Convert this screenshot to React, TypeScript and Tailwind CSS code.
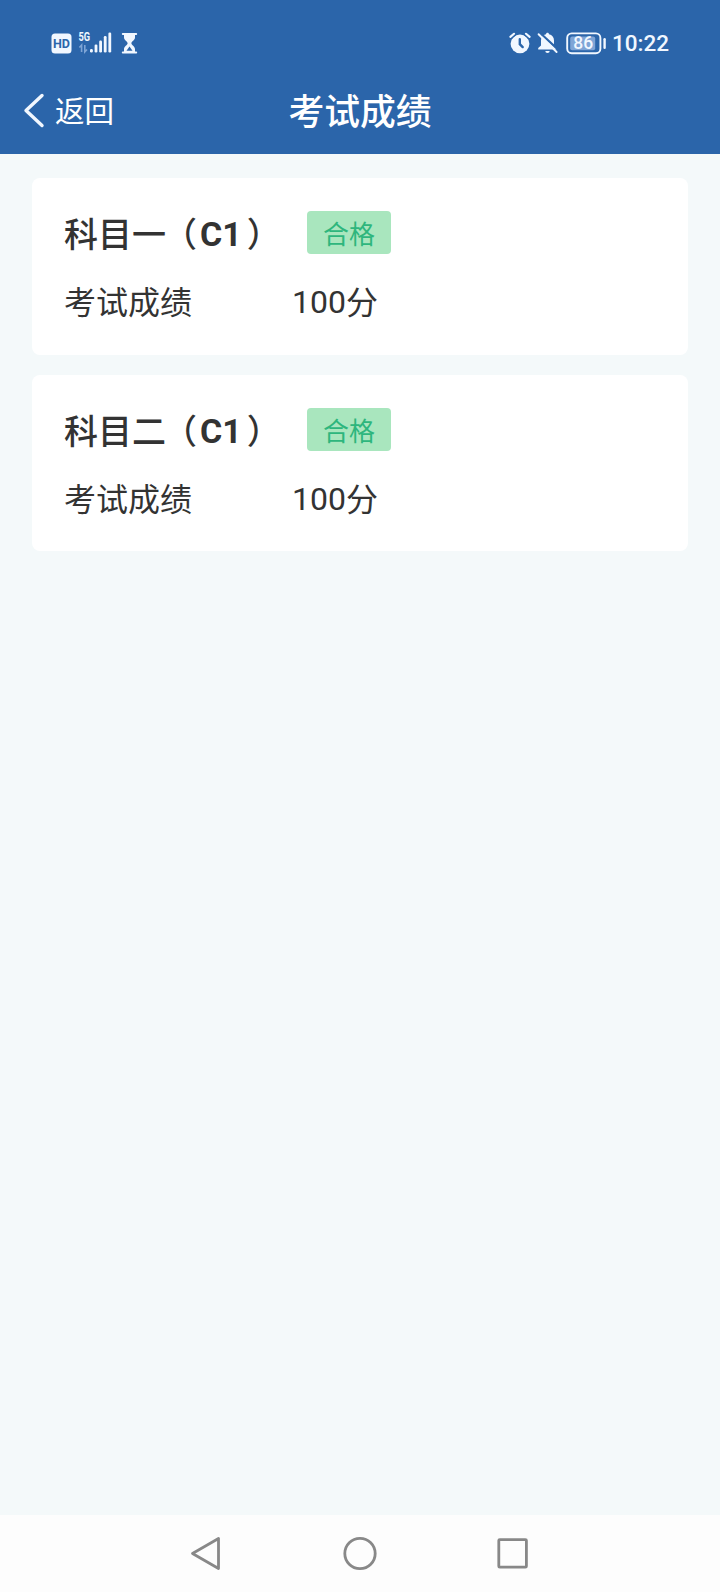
import * as React from 'react';

type Exam = {
  subject: string;
  license: string;
  score: number;
  result: string;
};

const exams: Exam[] = [
  { subject: '科目一', license: 'C1', score: 100, result: '合格' },
  { subject: '科目二', license: 'C1', score: 100, result: '合格' },
];

const SignalIcon: React.FC = () => (
  <svg className="ml-[6px] overflow-visible" width="34" height="24" viewBox="0 0 34 24" fill="#f1f7ff">
    <text x="0.4" y="10.4" fontSize="12.5" fontWeight="700" textLength="11.6" lengthAdjust="spacingAndGlyphs">5G</text>
    <path d="M3.6 21v-7L1.4 16.5M6.8 14v7l2.2-2.5" fill="none" stroke="#7fa5d6" strokeWidth="1.6" />
    <rect x="12" y="18" width="2.8" height="3.4" rx="1.2" />
    <rect x="16.6" y="13.5" width="2.8" height="7.9" rx="1.2" />
    <rect x="21.2" y="9.5" width="2.8" height="11.9" rx="1.2" />
    <rect x="25.8" y="5" width="2.8" height="16.4" rx="1.2" />
    <rect x="30.4" y="1.5" width="2.8" height="19.9" rx="1.2" />
  </svg>
);

const HourglassIcon: React.FC = () => (
  <svg className="ml-[9px]" width="17" height="22" viewBox="0 0 17 22">
    <path d="M1.8 2h13.4M1.8 20.5h13.4" stroke="#f1f7ff" strokeWidth="2" strokeLinecap="round" />
    <path d="M3 2v3.5c0 2.5 3.6 4 3.6 5.7S3 14.5 3 17v3.5h11V17c0-2.5-3.6-4.1-3.6-5.8S14 8 14 5.5V2z" fill="#f1f7ff" />
    <path d="M8.500 14.500l3 4.200h-6z" fill="#2b65aa" />
  </svg>
);

const AlarmIcon: React.FC = () => (
  <svg width="22" height="22" viewBox="0 0 22 22">
    <path d="M1.4 4.8 5 1.8M20.6 4.8 17 1.8" stroke="#f1f7ff" strokeWidth="2.2" strokeLinecap="round" />
    <circle cx="11" cy="11.8" r="9.4" fill="#f1f7ff" />
    <path d="M10.8 7.2v5l2.9 2.9" stroke="#2b65aa" strokeWidth="2.4" strokeLinecap="round" fill="none" />
    <path d="M2.5 6.6 7 2.2M19.5 6.6 15 2.2" stroke="#2b65aa" strokeWidth="1.2" />
  </svg>
);

const MutedIcon: React.FC = () => (
  <svg className="ml-[6px]" width="21" height="22" viewBox="0 0 21 22">
    <path d="M10.5.8c.9 0 1.5.6 1.5 1.5 3.2.7 5 3 5 6.2v5l2.3 2.5v1.5H1.2V16L4 13.5v-5c0-3.2 1.8-5.5 5-6.2C9 1.4 9.6.8 10.5.8zM8.3 18.9h4.4a2.2 2 0 0 1-4.4 0z" fill="#f1f7ff" />
    <path d="M3.2 1 21.4 18" stroke="#2b65aa" strokeWidth="2.2" />
    <path d="M1.6 2.2 19.6 20" stroke="#f1f7ff" strokeWidth="1.9" strokeLinecap="round" />
  </svg>
);

const BatteryIcon: React.FC = () => (
  <svg className="ml-[8px]" width="41" height="23" viewBox="0 0 41 23">
    <rect x="1.2" y="1.4" width="33.2" height="19.8" rx="4.5" fill="none" stroke="#f1f7ff" strokeWidth="1.9" />
    <rect x="4.2" y="4.4" width="25" height="13.8" rx="2" fill="#7fa5d6" />
    <rect x="37.4" y="6" width="2.4" height="11" rx="1.2" fill="#f1f7ff" />
    <text x="17.2" y="17.3" fontSize="17.5" fontWeight="500" textAnchor="middle" fill="#f1f7ff">86</text>
  </svg>
);

const StatusBar: React.FC = () => (
  <div className="flex h-[68px] items-center justify-between pt-[18px] pr-[51px] pl-[51px]">
    <div className="flex items-center">
      <svg width="21" height="21" viewBox="0 0 21 21">
        <rect x="0.5" y="0.5" width="20" height="20" rx="3.5" fill="#f1f7ff" />
        <text x="10.5" y="15.4" fontSize="13.5" fontWeight="700" textAnchor="middle" textLength="17" lengthAdjust="spacingAndGlyphs" fill="#2b65aa">HD</text>
      </svg>
      <SignalIcon />
      <HourglassIcon />
    </div>
    <div className="flex items-center">
      <AlarmIcon />
      <MutedIcon />
      <BatteryIcon />
      <span className="ml-[5px] pt-px text-[22.5px] leading-none font-medium text-[#f1f7ff]">10:22</span>
    </div>
  </div>
);

const Header: React.FC = () => (
  <header className="bg-[#2b65aa] text-white">
    <StatusBar />
    <div className="grid h-[86px] grid-cols-[1fr_auto_1fr] items-center">
      <button className="flex items-center pl-[23px] text-[29.5px] leading-none">
        <svg width="22" height="36" viewBox="0 0 22 36" fill="none" stroke="#f1f7ff" strokeWidth="3.4" strokeLinecap="round" strokeLinejoin="round">
          <path d="M19 2.5 3 17.5 19 32.5" />
        </svg>
        <span className="ml-[10px] pt-[3px]">返回</span>
      </button>
      <h1 className="pt-[5px] text-[35.8px] leading-none font-medium">考试成绩</h1>
    </div>
  </header>
);

const ExamCard: React.FC<{ exam: Exam }> = ({ exam }) => (
  <section className="h-[176.5px] rounded-[8px] bg-white px-8 pt-[33px] text-[#333]">
    <div className="flex h-[43px] items-center">
      <h2 className="flex h-[43px] w-[243px] items-center pt-[5px] text-[34px] leading-[38px] font-medium whitespace-nowrap">
        <span>{exam.subject}</span>
        <span className="ml-[14px] [font-feature-settings:'halt']">（</span>
        <span className="ml-[3px] pb-[2px] font-bold">{exam.license}</span>
        <span className="ml-[5px] [font-feature-settings:'halt']">）</span>
      </h2>
      <span className="h-[43px] rounded-[4px] bg-[#a9e6be] px-4 text-[26px] leading-[48px] text-[#2eb67d]">{exam.result}</span>
    </div>
    <div className="mt-[25px] flex h-[46px] items-start text-[32px] leading-[46px]">
      <span className="w-[228px] pt-px">考试成绩</span>
      <span>{exam.score}</span>
      <span className="pt-px">分</span>
    </div>
  </section>
);

const NavBar: React.FC = () => (
  <nav className="flex h-[77px] items-center justify-center bg-[#fdfdfd]">
    <svg width="340" height="36" viewBox="0 0 340 36" fill="none" stroke="#888" strokeWidth="2.8" strokeLinejoin="round">
      <path d="M28.5 2.5v30L2.5 17.5z" />
      <circle cx="170" cy="17.5" r="15.2" />
      <rect x="308.8" y="3.6" width="27.6" height="27.6" rx="1" />
    </svg>
  </nav>
);

const App: React.FC = () => {
  return (
    <div className="flex h-[1592px] w-[720px] flex-col bg-[#f4f9fa] font-[Roboto,'Noto_Sans_CJK_SC',sans-serif]">
      <Header />
      <main className="flex grow flex-col gap-5 px-8 pt-6">
        {exams.map((exam) => (
          <ExamCard key={exam.subject} exam={exam} />
        ))}
      </main>
      <NavBar />
    </div>
  );
};

export default App;
